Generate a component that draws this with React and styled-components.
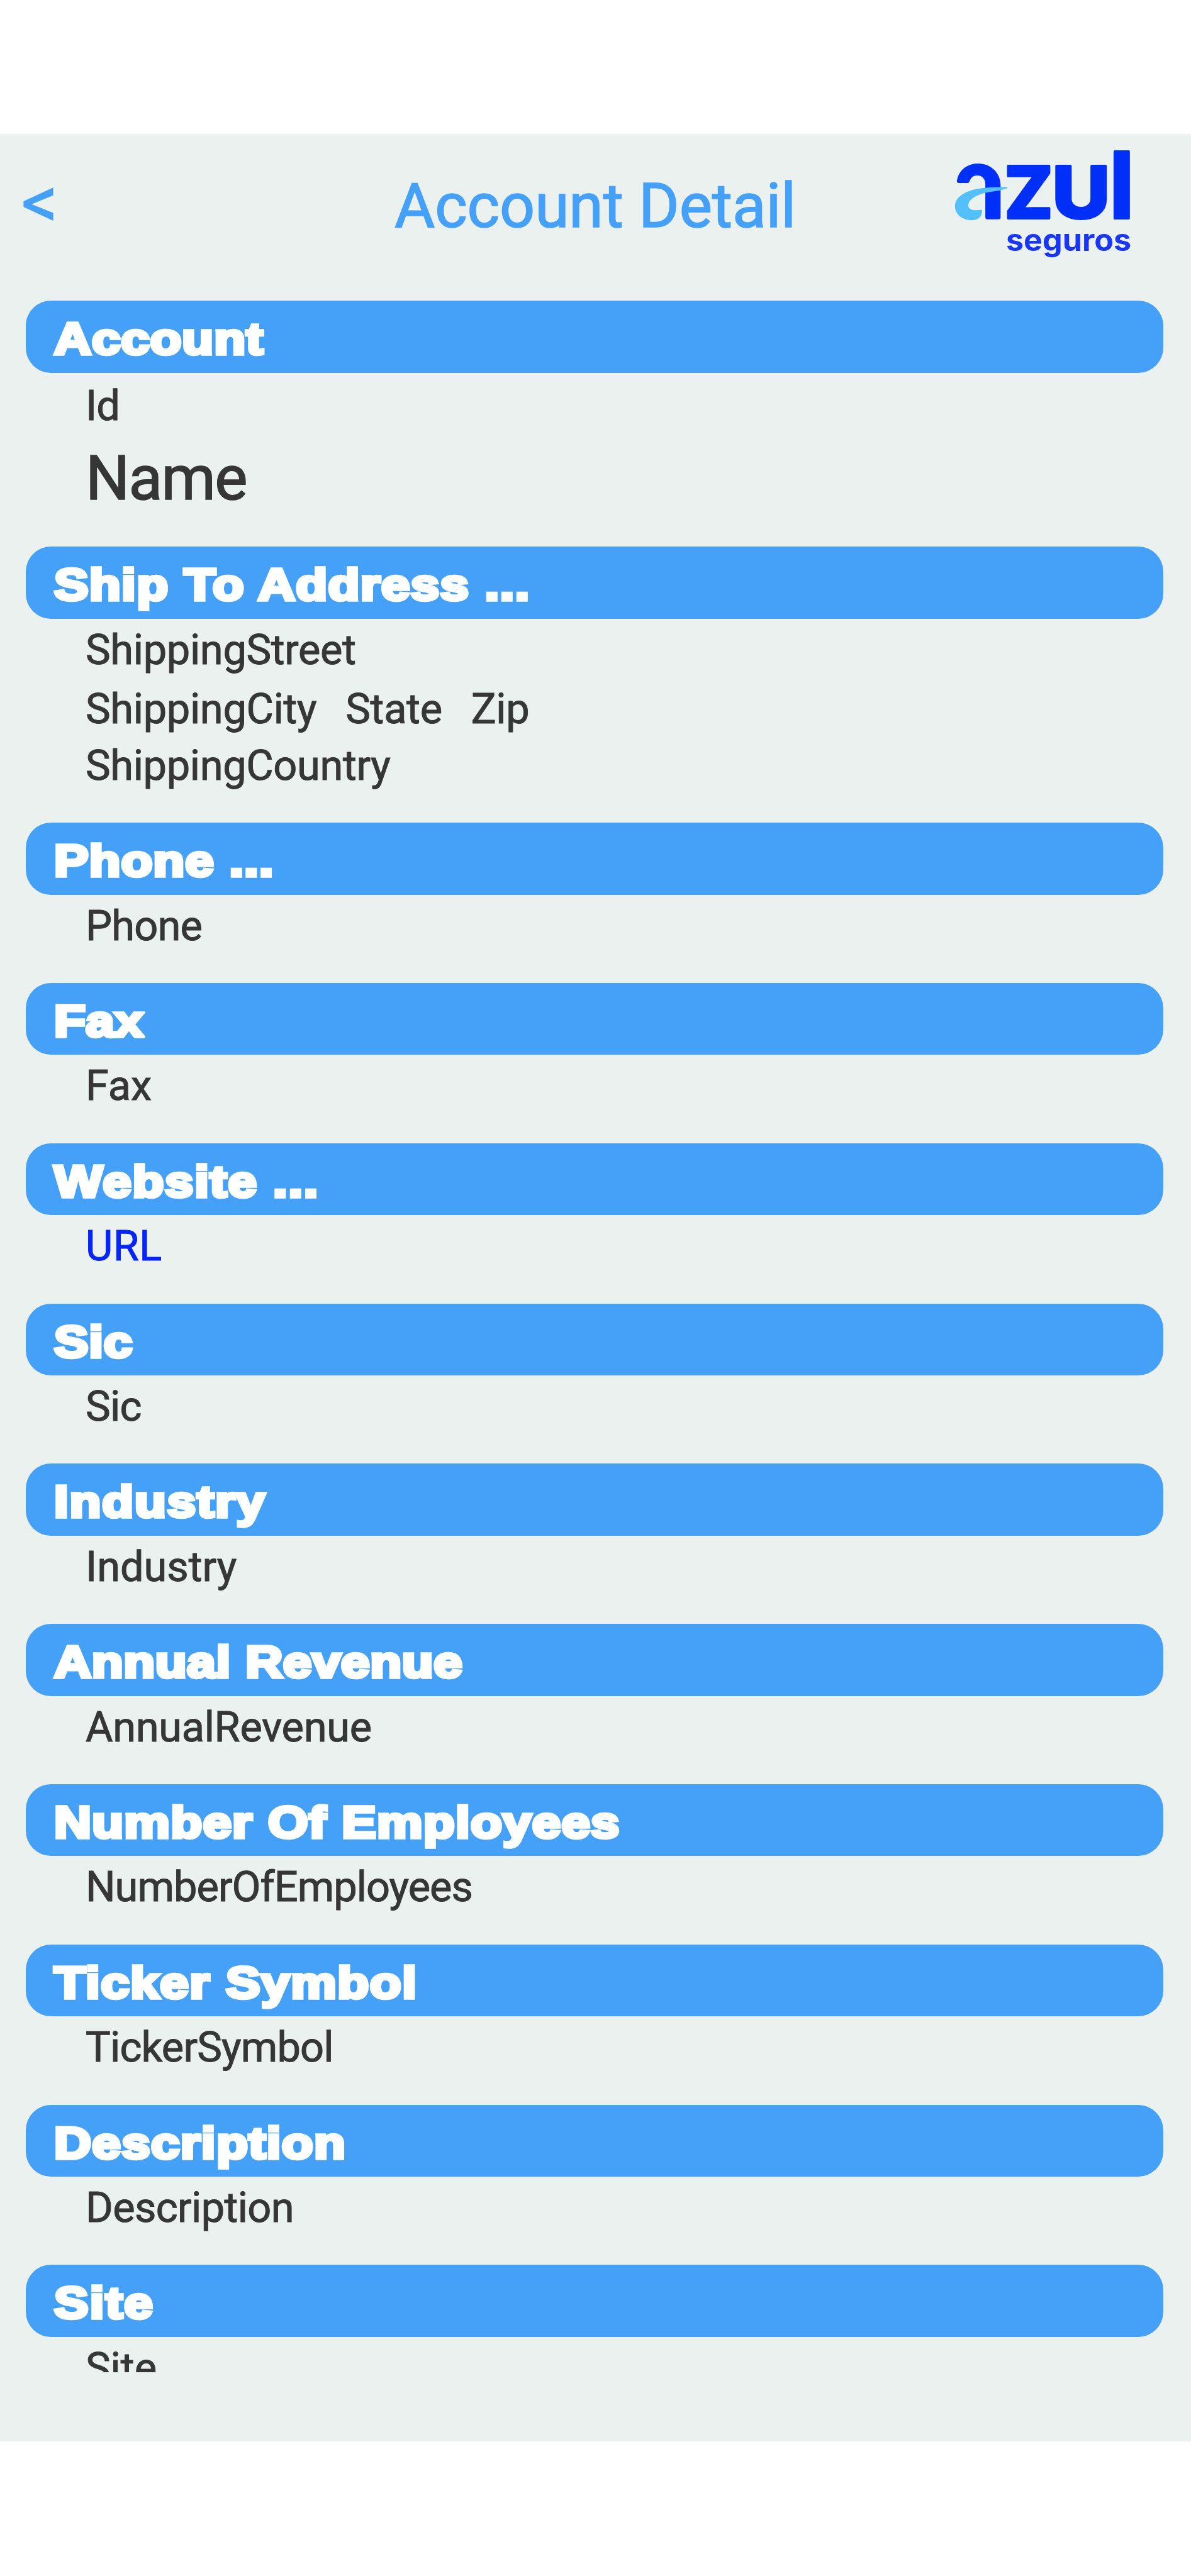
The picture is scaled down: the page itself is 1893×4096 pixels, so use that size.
import React from 'react';
import styled, { createGlobalStyle } from 'styled-components';

const GlobalStyle = createGlobalStyle`
  html, body { margin: 0; padding: 0; background: #fff; }
  #root { width: 1893px; }
  * { box-sizing: border-box; }
`;

const Page = styled.div`
  width: 1893px;
  height: 4096px;
  padding: 213px 0 214px;
  background: #ffffff;
  font-family: Roboto, "Liberation Sans", sans-serif;
  overflow: hidden;
`;

const Screen = styled.main`
  height: 3669px;
  background: #eaf1ee;
  display: flex;
  flex-direction: column;
`;

const Header = styled.header`
  height: 265px;
  flex: none;
  display: grid;
  grid-template-columns: 620px 1fr 420px;
`;

const BackButton = styled.button`
  justify-self: start;
  align-self: start;
  margin: 39px 0 0 34px;
  padding: 0;
  border: 0;
  background: none;
  color: #45a0f8;
  font: 400 115px/140px Roboto, sans-serif;
  -webkit-text-stroke: 1.2px #45a0f8;
`;

const Title = styled.h1`
  margin: 56px 0 0;
  color: #45a0f8;
  font-size: 98.5px;
  line-height: 118px;
  font-weight: 400;
  letter-spacing: -0.1px;
  -webkit-text-stroke: 1.6px #45a0f8;
  white-space: nowrap;
  padding-left: 7px;
`;

const LogoBox = styled.div`
  padding: 22px 0 0 39px;
`;

const LogoArt = styled.svg`
  display: block;
  width: 290px;
  height: 178px;
  overflow: visible;
`;

const Scroller = styled.div`
  height: 3294px;
  overflow: hidden;
  padding: 0 44px 0 41px;
`;

const Section = styled.section`
  height: ${(p) => p.$height}px;
`;

const Bar = styled.h2`
  margin: 0 0 4px;
  height: 114.5px;
  border-radius: 40px;
  background: #45a0f8;
  padding-left: 45px;
  color: #ffffff;
  font: 700 71px/121.6px "Liberation Sans", Arial, sans-serif;
  white-space: nowrap;
`;

const BarText = styled.span`
  display: inline-block;
  transform-origin: 0 50%;
  transform: scaleX(1.15);
  -webkit-text-stroke: 5.6px #ffffff;
  letter-spacing: ${(p) => p.$spacing}px;
`;

const Line = styled.div`
  height: ${(p) => p.$height || 91}px;
  line-height: ${(p) => p.$height || 91}px;
  padding-left: 95px;
  font-size: ${(p) => (p.$large ? 98.5 : 66.7)}px;
  -webkit-text-stroke: ${(p) => (p.$large ? 1.6 : 1)}px currentColor;
  letter-spacing: ${(p) => p.$spacing || 0}px;
  color: ${(p) => p.$color || '#363636'};
  display: flex;
  gap: 46px;
  white-space: nowrap;
`;

const Mark = styled.text`
  font-family: Inter, sans-serif;
  font-weight: 800;
  fill: #0030f8;
  stroke: #0030f8;
  stroke-width: 14px;
  stroke-linejoin: round;
  text-transform: ${(p) => (p.$caps ? 'uppercase' : 'none')};
`;

const Tagline = styled.text`
  font-family: Inter, sans-serif;
  font-weight: 650;
  fill: #1836f4;
`;

function Logo() {
  return (
    <LogoBox>
      <LogoArt viewBox="200 90 1040 660" preserveAspectRatio="none" aria-label="azul seguros">
        <path
          d="M243 298 Q231 298 232 285 C240 225 290 183 352 183 C425 183 481 238 481 310 V500 Q481 512 469 512 H406 Q394 512 394 500 V305 C394 275 378 253 348 253 C322 253 312 268 304 288 Q300 298 290 298 Z"
          fill="#0030f8"
        />
        <path
          d="M520 327 C480 345 440 345 400 354 C350 364 297 392 297 430 C299 458 330 462 375 455 C378 495 355 517 316 517 C260 517 221 480 221 436 C221 385 270 347 350 332 C400 323 460 320 520 322 Z"
          fill="#53c0fb"
        />
        <Mark $caps x="503" y="505" fontSize="421" textLength="276" lengthAdjust="spacingAndGlyphs">z</Mark>
        <Mark $caps x="775" y="505" fontSize="421" textLength="330" lengthAdjust="spacingAndGlyphs">u</Mark>
        <Mark x="1105" y="505" fontSize="540" textLength="134" lengthAdjust="spacingAndGlyphs">l</Mark>
        <Tagline x="512" y="698" fontSize="180" textLength="714" lengthAdjust="spacingAndGlyphs">seguros</Tagline>
      </LogoArt>
    </LogoBox>
  );
}

const sections = [
  {
    title: 'Account',
    spacing: 0.8,
    height: 391,
    lines: [
      { text: ['Id'], height: 97, spacing: -1 },
      { text: ['Name'], large: true, height: 134, spacing: -1.7 },
    ],
  },
  {
    title: 'Ship To Address ...',
    spacing: 1.2,
    height: 439.2,
    lines: [
      { text: ['ShippingStreet'], spacing: -0.3 },
      { text: ['ShippingCity', 'State', 'Zip'], height: 96, spacing: -0.3 },
      { text: ['ShippingCountry'], height: 85, spacing: -0.33 },
    ],
  },
  { title: 'Phone ...', spacing: 0.9, lines: [{ text: ['Phone'], spacing: -0.8 }] },
  { title: 'Fax', spacing: 0.4, lines: [{ text: ['Fax'] }] },
  { title: 'Website ...', spacing: 1.5, lines: [{ text: ['URL'], color: '#0524fa', spacing: 0.5 }] },
  { title: 'Sic', spacing: 0.7, lines: [{ text: ['Sic'], spacing: -0.7 }] },
  { title: 'Industry', spacing: 1.6, lines: [{ text: ['Industry'] }] },
  { title: 'Annual Revenue', spacing: 0.6, lines: [{ text: ['AnnualRevenue'], spacing: -0.3 }] },
  { title: 'Number Of Employees', spacing: 1.1, lines: [{ text: ['NumberOfEmployees'], spacing: -0.95 }] },
  { title: 'Ticker Symbol', spacing: 1.4, lines: [{ text: ['TickerSymbol'], spacing: -0.8 }] },
  { title: 'Description', spacing: 1.2, lines: [{ text: ['Description'], spacing: -0.6 }] },
  { title: 'Site', spacing: 2, lines: [{ text: ['Site'] }] },
];

export default function App() {
  return (
    <>
      <GlobalStyle />
      <Page>
        <Screen>
          <Header>
            <BackButton>&lt;</BackButton>
            <Title>Account Detail</Title>
            <Logo />
          </Header>
          <Scroller>
            {sections.map((s) => (
              <Section key={s.title} $height={s.height || 254.8}>
                <Bar>
                  <BarText $spacing={s.spacing}>{s.title}</BarText>
                </Bar>
                {s.lines.map((l) => (
                  <Line key={l.text[0]} $large={l.large} $height={l.height} $color={l.color} $spacing={l.spacing}>
                    {l.text.map((t) => (
                      <span key={t}>{t}</span>
                    ))}
                  </Line>
                ))}
              </Section>
            ))}
          </Scroller>
        </Screen>
      </Page>
    </>
  );
}
